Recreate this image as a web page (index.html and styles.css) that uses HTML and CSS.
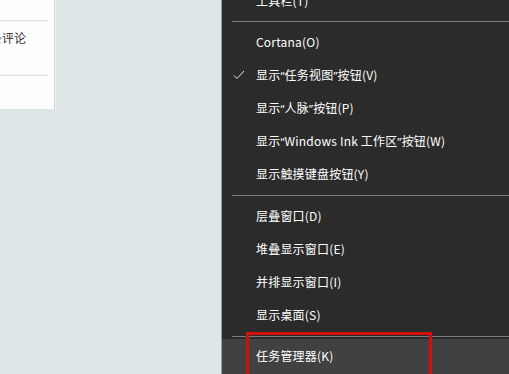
FILE: index.html
```html
<!DOCTYPE html>
<html lang="zh-CN">
<head>
<meta charset="utf-8">
<link rel="stylesheet" href="styles.css">
</head>
<body>
<div class="page">
  <div class="panel">
    <div class="row row-top"></div>
    <div class="row row-mid"><span class="comment">条评论</span></div>
    <div class="row row-bot"></div>
  </div>
  <div class="menu">
    <div class="item">工具栏(T)</div>
    <div class="sep"></div>
    <div class="item">Cortana(O)</div>
    <div class="item"><svg class="check" width="12" height="10" viewBox="0 0 12 10"><polyline points="1,5.5 4,8.5 11,1" fill="none" stroke="#e8e8e8" stroke-width="1"/></svg>显示<span class="q">“</span>任务视图<span class="q">”</span>按钮(V)</div>
    <div class="item">显示<span class="q">“</span>人脉<span class="q">”</span>按钮(P)</div>
    <div class="item">显示<span class="q">“</span>Windows Ink 工作区<span class="q">”</span>按钮(W)</div>
    <div class="item">显示触摸键盘按钮(Y)</div>
    <div class="sep sep-wide"></div>
    <div class="item">层叠窗口(D)</div>
    <div class="item">堆叠显示窗口(E)</div>
    <div class="item">并排显示窗口(I)</div>
    <div class="item">显示桌面(S)</div>
    <div class="sep sep-wide"></div>
    <div class="item hot">任务管理器(K)</div>
    <div class="mark"></div>
  </div>
</div>
</body>
</html>
```
FILE: styles.css
```css
html, body {
  margin: 0;
  padding: 0;
}
body {
  background: #dfe6e7;
  font-family: "Noto Sans CJK SC", "Noto Sans", sans-serif;
  overflow: hidden;
}
.page {
  display: flex;
  align-items: flex-start;
  height: 374px;
  overflow: hidden;
}
.panel {
  width: 54px;
  height: 109px;
  background: #fdfdfd;
  border-right: 1px solid #cfd3d4;
  box-shadow: 1px 0 0 #eef2f2;
  display: flex;
  flex-direction: column;
  flex-shrink: 0;
  overflow: hidden;
}
.row-top {
  height: 20px;
  border-bottom: 1px solid #dedede;
  margin-right: 6px;
}
.row-mid {
  height: 54px;
  border-bottom: 1px solid #dedede;
  margin-right: 6px;
}
.comment {
  display: block;
  margin-left: -10px;
  padding-top: 9px;
  font-size: 12px;
  line-height: 16px;
  color: #333;
  white-space: nowrap;
}
.menu {
  position: relative;
  margin-left: 166px;
  margin-top: -16px;
  width: 288px;
  flex-shrink: 0;
  height: 400px;
  background: #2b2b2b;
  border-left: 1px solid #9a9a9a;
  display: flex;
  flex-direction: column;
}
.item {
  height: 33px;
  line-height: 33px;
  padding-left: 34px;
  font-size: 12px;
  letter-spacing: 0.2px;
  color: #ffffff;
  white-space: nowrap;
  position: relative;
}
.q {
  font-family: "Noto Sans", sans-serif;
  font-size: 11px;
}
.check {
  position: absolute;
  left: 11px;
  top: 12px;
}
.sep {
  height: 1px;
  background: #7d7d7d;
  margin: 4px 0 3px 10px;
}
.sep-wide {
  margin-top: 5px;
}
.hot {
  background: #414141;
  height: 60px;
}
.mark {
  position: absolute;
  left: 24px;
  top: 348px;
  width: 180px;
  height: 80px;
  border: 3px solid #d3100f;
}
```
